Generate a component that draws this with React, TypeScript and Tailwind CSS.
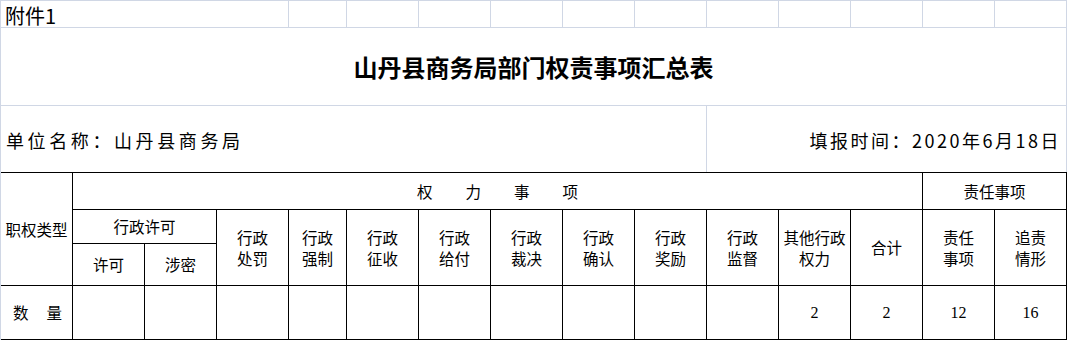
import React from "react";

const cjk = { fontFamily: '"Noto Sans CJK SC", "Noto Sans", sans-serif' };
const serif = { fontFamily: '"Liberation Serif", "Noto Sans CJK SC", serif' };

function C({ className = "", children }: { className?: string; children?: React.ReactNode }) {
  return (
    <div className={"border-r border-b border-black flex items-center justify-center text-center text-[15.5px] leading-[21px] text-black " + className}>
      {children}
    </div>
  );
}

function Two({ a, b }: { a: string; b: string }) {
  return (
    <div className="flex flex-col items-center">
      <span>{a}</span>
      <span>{b}</span>
    </div>
  );
}

export default function App() {
  const cols = ["", "", "", "", "", "", "", "", "", ""];
  return (
    <div className="w-[1067px] h-[340px] bg-white overflow-hidden text-black" style={cjk}>
      <div className="border-l border-t border-[#d0d7e5]">
        {/* Row 1 */}
        <div className="flex h-[27px] border-b border-[#d0d7e5]">
          <div className="w-[288px] border-r border-[#d0d7e5] flex items-center pl-[4px] pt-[3px] text-[20px] leading-none">附件1</div>
          <div className="w-[58px] border-r border-[#d0d7e5]" />
          {cols.map((_, i) => (
            <div key={i} className="w-[72px] border-r border-[#d0d7e5]" />
          ))}
        </div>
        {/* Row 2 */}
        <div className="flex h-[78px] border-b border-[#d0d7e5]">
          <div className="w-[1066px] border-r border-[#d0d7e5] flex items-center justify-center text-[24px] font-bold leading-none">
            山丹县商务局部门权责事项汇总表
          </div>
        </div>
        {/* Row 3 */}
        <div className="flex h-[66px]">
          <div className="w-[706px] border-r border-[#d0d7e5] flex items-center pl-[5px] pt-[1px] text-[18px] tracking-[3.6px] leading-none">
            单位名称：山丹县商务局
          </div>
          <div className="w-[360px] border-r border-[#d0d7e5] flex items-center justify-end pr-[5px] pt-[1px] text-[18px] tracking-[2.5px] leading-none">
            填报时间：2020年6月18日
          </div>
        </div>
        {/* Table */}
        <div className="grid grid-cols-[72px_72px_72px_72px_58px_repeat(10,72px)] grid-rows-[37px_34px_42px_54px] border-t border-black">
          <C className="row-span-3">职权类型</C>
          <C className="col-span-12">
            <div className="flex gap-[33px]">
              <span>权</span>
              <span>力</span>
              <span>事</span>
              <span>项</span>
            </div>
          </C>
          <C className="col-span-2">责任事项</C>

          <C className="col-span-2">行政许可</C>
          <C className="row-span-2"><Two a="行政" b="处罚" /></C>
          <C className="row-span-2"><Two a="行政" b="强制" /></C>
          <C className="row-span-2"><Two a="行政" b="征收" /></C>
          <C className="row-span-2"><Two a="行政" b="给付" /></C>
          <C className="row-span-2"><Two a="行政" b="裁决" /></C>
          <C className="row-span-2"><Two a="行政" b="确认" /></C>
          <C className="row-span-2"><Two a="行政" b="奖励" /></C>
          <C className="row-span-2"><Two a="行政" b="监督" /></C>
          <C className="row-span-2"><Two a="其他行政" b="权力" /></C>
          <C className="row-span-2">合计</C>
          <C className="row-span-2"><Two a="责任" b="事项" /></C>
          <C className="row-span-2"><Two a="追责" b="情形" /></C>

          <C>许可</C>
          <C>涉密</C>

          <C>
            <div className="flex gap-[18px] pl-[2px]">
              <span>数</span>
              <span>量</span>
            </div>
          </C>
          <C />
          <C />
          <C />
          <C />
          <C />
          <C />
          <C />
          <C />
          <C />
          <C />
          <C><span className="text-[16px]" style={serif}>2</span></C>
          <C><span className="text-[16px]" style={serif}>2</span></C>
          <C><span className="text-[16px]" style={serif}>12</span></C>
          <C><span className="text-[16px]" style={serif}>16</span></C>
        </div>
      </div>
    </div>
  );
}
